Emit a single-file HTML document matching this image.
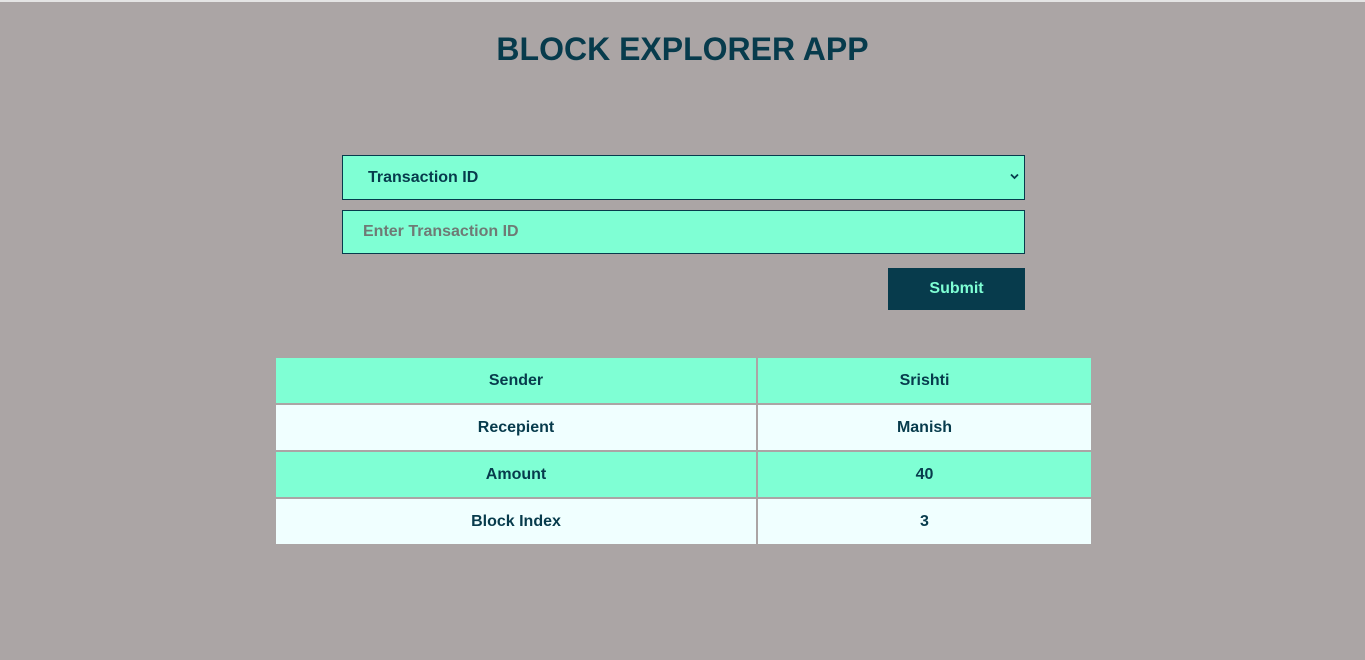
<!DOCTYPE html>
<html><head><style>
html,body{margin:0;padding:0}
body{width:1365px;height:660px;background:#aba5a5;font-family:"Liberation Sans",Arial,sans-serif;position:relative;overflow:hidden}
.top{position:absolute;left:0;top:0;width:1365px;height:2px;background:#e4e4e4}
.abs{position:absolute;box-sizing:border-box}
h1{position:absolute;left:0;width:1365px;top:29px;margin:0;text-align:center;font-size:32px;font-weight:bold;color:#073b4c;line-height:40px}
.field{left:342px;width:683px;background:#7fffd4;border:1px solid #073b4c;font-size:16px;font-weight:bold}
.btn{left:888px;top:268px;width:137px;height:42px;background:#073b4c;color:#7fffd4;font-weight:bold;font-size:16px;text-align:center;line-height:42px}
.row{position:absolute;left:276px;width:815px;font-weight:bold;font-size:16px;color:#073b4c}
.row div{position:absolute;top:0;height:100%;display:flex;align-items:center;justify-content:center;padding-top:1px;box-sizing:border-box}
.c1{left:0;width:480px}.c2{left:482px;width:333px}
.a div{background:#7fffd4}.w div{background:#f0ffff}
</style></head><body>
<div class="top"></div>
<h1>BLOCK EXPLORER APP</h1>
<div class="abs field" style="top:155px;height:45px;line-height:43px;padding-left:25px;color:#073b4c">Transaction ID
<svg style="position:absolute;right:5px;top:17px" width="9" height="7" viewBox="0 0 9 7"><path d="M1 1.5L4.5 5L8 1.5" stroke="#073b4c" stroke-width="1.8" fill="none"/></svg></div>
<div class="abs field" style="top:210px;height:44px;line-height:42px;padding-left:20px;color:#6f7a75">Enter Transaction ID</div>
<div class="abs btn">Submit</div>
<div class="row a" style="top:358px;height:45px"><div class="c1">Sender</div><div class="c2">Srishti</div></div>
<div class="row w" style="top:405px;height:45px"><div class="c1">Recepient</div><div class="c2">Manish</div></div>
<div class="row a" style="top:452px;height:45px"><div class="c1">Amount</div><div class="c2">40</div></div>
<div class="row w" style="top:499px;height:45px"><div class="c1">Block Index</div><div class="c2">3</div></div>
</body></html>
